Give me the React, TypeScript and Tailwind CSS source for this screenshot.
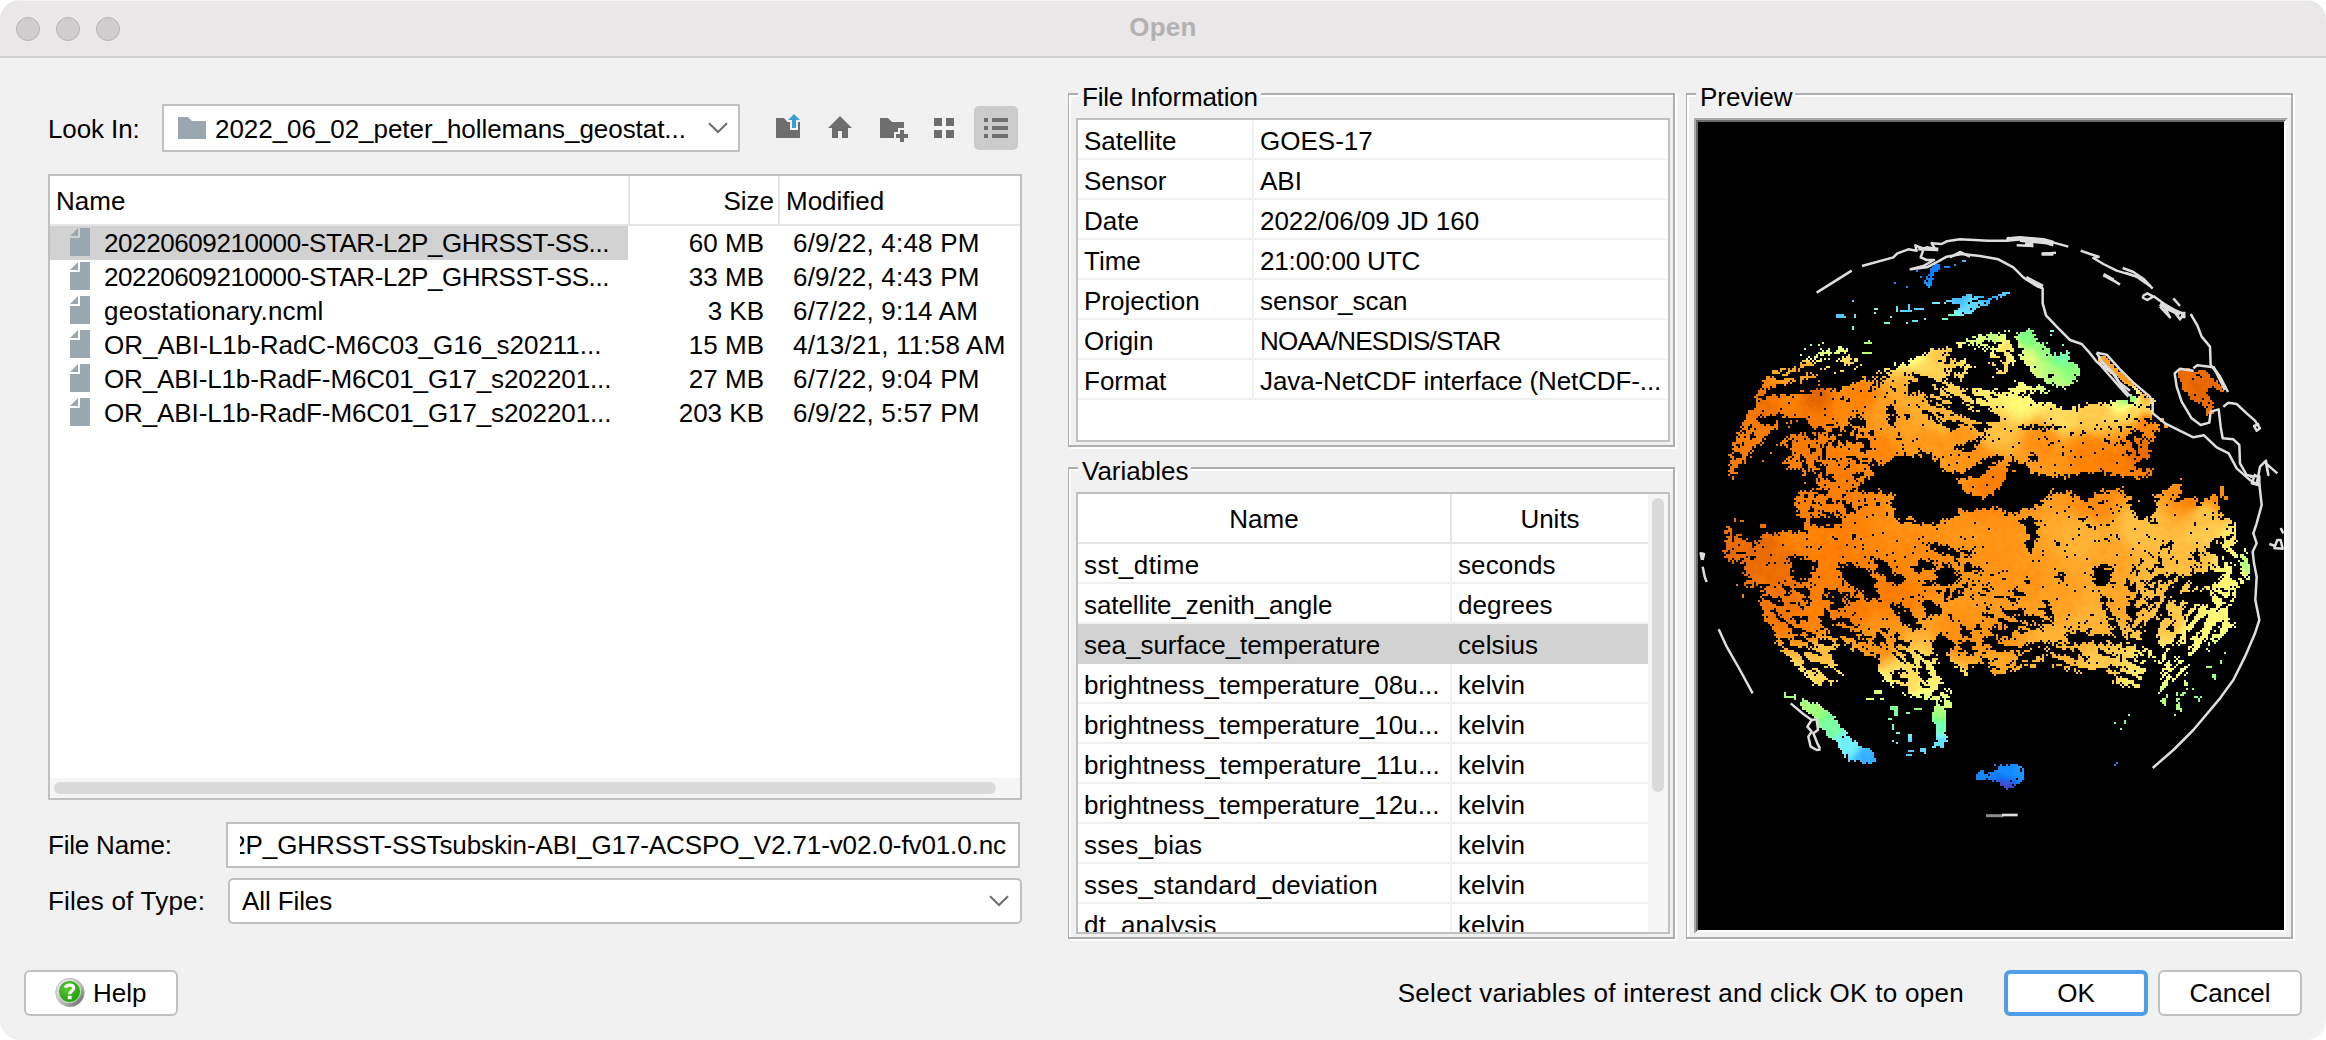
import React, { useMemo } from "react";

type Pt = [number, number];

/* ---------- Preview image: sea surface temperature over the full disk ---------- */

// Drawing units: 3 per screen pixel; one data cell is 6 units wide.
const VIEW = { x: 114, y: -174, w: 1758, h: 2424 };
const CELL = 6;

const parse = (s: string): Pt[] => s.trim().split(/\s+/).map((p) => p.split(",").map(Number) as Pt);

type Shape = { p: Pt[]; b: [number, number, number, number] };
const shape = (s: string): Shape => {
  const p = parse(s);
  const xs = p.map((q) => q[0]);
  const ys = p.map((q) => q[1]);
  return { p, b: [Math.min(...xs), Math.min(...ys), Math.max(...xs), Math.max(...ys)] };
};

const DATA = [
  // northern band
  "205,880 216,800 240,760 262,700 290,650 306,605 350,575 400,568 430,545 450,528 480,512 540,506 565,508 545,522 590,540 625,548 590,562 530,578 500,590 540,600 620,590 660,576 710,560 745,545 800,522 860,498 930,478 969,465 1000,462 1045,452 1045,462 1000,480 985,510 1010,500 1035,480 1070,480 1100,470 1108,495 1080,515 1060,555 1040,575 1010,590 980,575 990,620 1060,640 1160,672 1240,685 1320,668 1380,660 1440,675 1475,690 1475,720 1500,740 1470,790 1462,840 1420,850 1440,870 1510,872 1440,893 1340,885 1290,878 1210,890 1130,882 1070,840 1000,825 960,850 900,882 850,870 810,822 730,828 660,850 610,842 640,870 630,900 560,930 540,900 580,870 540,860 500,900 480,900 460,860 420,880 370,855 400,830 380,790 350,800 300,785 275,810 260,850 230,850 222,912",
  // green patch
  "1080,448 1112,448 1125,470 1150,490 1185,530 1225,512 1232,548 1262,560 1240,612 1212,625 1160,608 1120,580 1085,545 1068,530 1050,500",
  "1040,630 1075,620 1060,600 1100,610 1170,622 1180,635 1120,632 1060,640",
  "969,470 1020,460 1045,452 1040,470 1000,490 980,520 969,500",
  // tropical and southern body
  "195,1140 198,1040 230,1060 270,1092 340,1052 400,1058 445,1058 430,1010 398,972 425,938 470,925 480,870 540,860 580,850 620,900 560,920 610,935 690,940 700,1000 730,1040 752,1000 760,1036 820,1030 880,1010 900,990 960,990 1000,980 1060,1000 1130,985 1170,940 1230,930 1270,960 1290,960 1320,930 1380,925 1400,950 1450,950 1500,940 1560,900 1560,930 1520,990 1560,960 1600,945 1610,985 1650,950 1680,950 1680,1010 1720,1035 1735,1080 1770,1110 1765,1190 1720,1260 1700,1300 1720,1340 1660,1390 1600,1430 1565,1490 1590,1520 1560,1560 1540,1590 1500,1565 1508,1460 1470,1430 1430,1370 1400,1370 1460,1440 1440,1530 1385,1512 1300,1475 1220,1462 1150,1445 1090,1485 1050,1470 1000,1485 985,1440 930,1455 905,1440 925,1450 925,1490 880,1450 850,1400 830,1460 850,1510 878,1550 875,1585 810,1560 740,1545 680,1500 650,1470 650,1430 560,1400 520,1400 530,1470 545,1480 500,1525 455,1505 400,1455 365,1410 340,1350 292,1275 315,1220 260,1210 252,1150",
  "880,900 969,880 990,860 1045,830 1045,870 1070,875 1045,880 1020,925 975,950 930,948",
  // high latitudes
  "418,1562 450,1562 490,1578 522,1610 560,1662 600,1696 632,1710 650,1738 628,1754 600,1742 565,1742 540,1705 505,1665 476,1640 462,1606 428,1592",
  "815,1585 866,1566 858,1610 862,1680 850,1702 824,1698 830,1650 818,1620",
  "948,1790 960,1765 975,1790 1005,1774 1020,1758 1070,1752 1092,1768 1094,1802 1064,1820 1025,1814 990,1799 950,1799",
  "850,415 870,400 910,375 850,366 880,358 930,342 950,345 985,360 1010,348 1045,335 1050,340 1000,362 970,380 920,402",
  "795,310 808,280 818,255 840,255 838,275 822,285 806,326",
  // Gulf of California and Gulf of Mexico
  "1312,522 1330,525 1380,575 1430,620 1475,660 1470,680 1425,630 1370,590 1320,550",
  "1555,575 1580,565 1610,575 1635,565 1655,590 1690,620 1695,640 1660,620 1640,640 1665,670 1660,690 1640,712 1630,680 1600,660 1565,630",
  "1430,650 1480,655 1485,680 1420,670 1400,640",
].map(shape);

const HOLES = [
  "308,790 340,750 420,712 448,712 455,760 420,755 380,770 350,800 300,835 270,800",
  "320,628 380,608 520,612 560,625 480,625 430,640 330,645",
  "430,600 560,575 600,590 640,578 670,596 600,600 540,630 480,605 430,615",
  "380,590 440,560 520,548 530,560 450,580 400,600",
  "440,545 500,525 560,524 520,536 460,550",
  "290,712 350,705 410,712 360,735 300,735",
  "740,610 790,590 820,600 800,640 740,640",
  "820,620 880,560 930,560 880,592 920,600 960,625 900,625 860,600 830,640",
  "850,670 900,665 940,690 999,680 990,710 930,715 880,700",
  "900,600 935,560 1000,560 1000,625 940,620",
  "870,500 930,490 985,510 990,560 940,560 900,540 850,555",
  "770,680 800,690 840,720 900,740 880,755 820,720",
  "680,680 705,680 705,740 685,735",
  "540,755 590,760 598,790 545,790",
  "880,790 920,790 960,770 990,770 940,810 890,815",
  "560,715 610,700 620,740 570,745",
  "1010,742 1110,738 1230,740 1120,752 1060,745",
  "1110,820 1140,825 1130,850 1108,848",
  "1085,550 1060,590 1110,600 1160,625 1080,595 1060,560",
  "392,1130 440,1130 470,1155 465,1170 425,1210 395,1190",
  "530,1155 570,1150 620,1165 640,1200 665,1260 635,1262 590,1230 540,1190",
  "630,1125 690,1150 700,1180 740,1195 700,1215 660,1190",
  "455,1010 530,1010 550,1030 520,1045 455,1035",
  "740,1160 800,1140 830,1150 780,1180",
  "825,1220 830,1170 860,1150 905,1185 880,1210 860,1225",
  "800,1085 860,1095 905,1120 880,1130 810,1110",
  "900,1110 950,1112 920,1128",
  "900,1150 930,1155 970,1175 920,1180",
  "780,1260 820,1260 850,1300 800,1310",
  "690,1270 740,1280 780,1330 810,1345 760,1350 720,1320",
  "480,1215 560,1240 600,1265 540,1260 490,1240",
  "850,1240 900,1225 950,1190 900,1245 860,1260",
  "900,1345 930,1345 930,1370 905,1370",
  "830,1360 890,1390 850,1440 810,1400",
  "890,1380 940,1390 945,1430 900,1420",
  "560,1440 600,1410 660,1440 650,1500 600,1490 560,1480",
  "430,1440 460,1470 430,1480",
  "1080,1020 1120,1010 1130,1060 1115,1120 1095,1100 1110,1070",
  "1300,1160 1340,1155 1360,1180 1340,1215 1315,1220 1300,1190",
  "1190,1175 1220,1190 1225,1215 1190,1205",
  "1060,1295 1120,1305 1190,1335 1140,1335 1080,1320",
  "1000,1340 1060,1340 1050,1380 1000,1370",
  "1210,1350 1300,1360 1400,1380 1430,1400 1340,1390 1230,1390",
  "1310,1230 1340,1270 1370,1340 1400,1380 1360,1370",
  "1580,1190 1660,1170 1700,1180 1660,1210 1600,1220",
  "1560,1230 1650,1230 1640,1270 1580,1280",
  "1660,1080 1700,1110 1730,1150 1690,1150",
  "1400,960 1460,940 1500,950 1480,1010 1440,1020",
  "1490,1100 1550,1085 1520,1110",
  "1060,1440 1120,1405 1250,1410 1290,1440 1180,1420 1080,1450",
  "1060,1400 1140,1385 1240,1395 1150,1400 1080,1412",
  "1470,1330 1490,1400 1530,1440 1490,1440 1440,1370",
  "1520,1400 1600,1380 1580,1440 1530,1440",
  "1300,880 1350,900 1420,905 1340,910",
  "500,1335 560,1345 640,1400 560,1370 500,1370",
  "620,640 680,600 700,560 660,600",
].map(shape);

// Broken-cloud zones: outline, streak angle in degrees, share of cells removed, streak length
const ZONES: [Shape, number, number, number][] = (
  [
    ["360,1370 560,1380 560,1530 380,1520", 28, 0.46, 3],
    ["640,1340 860,1400 890,1600 640,1560", 40, 0.42, 2],
    ["969,1370 1250,1390 1470,1460 1450,1540 1250,1480 1050,1500 969,1480", 14, 0.45, 5],
    ["1400,1270 1560,1160 1740,1250 1740,1400 1560,1600 1480,1560 1420,1400", -48, 0.45, 3],
    ["1580,1120 1700,1060 1790,1080 1780,1260 1640,1260", 50, 0.43, 2],
    ["740,590 969,540 1050,700 969,760 860,740", 22, 0.46, 3],
    ["280,1210 500,1210 660,1400 400,1400", 20, 0.4, 2],
    ["370,740 640,740 660,860 380,880", 45, 0.4, 1.5],
    ["420,850 720,850 700,960 420,1060", 40, 0.38, 1.5],
    ["1340,720 1510,690 1510,860 1380,830", 60, 0.38, 1.5],
    ["969,470 1080,450 1090,560 990,600", 50, 0.45, 2],
    ["300,500 640,500 640,600 300,660", -18, 0.38, 4],
    ["740,1100 969,1100 1000,1380 860,1320", 30, 0.3, 2],
    ["969,1220 1160,1240 1180,1330 969,1400", 10, 0.4, 3],
    ["1390,1160 1560,1080 1580,1260 1420,1400", -60, 0.38, 2],
    ["1090,1000 1500,960 1500,1100 1100,1100", 20, 0.24, 2],
    ["1330,1200 1480,1200 1480,1400 1370,1380", 65, 0.33, 2],
    ["190,1000 310,1060 270,1220 190,1160", 40, 0.34, 1],
    ["200,700 300,640 280,920 190,920", -60, 0.36, 1.5],
    ["1550,1430 1600,1500 1560,1600 1490,1600", -75, 0.42, 3],
    ["840,340 1060,330 1060,375 900,375", -20, 0.38, 4],
    ["1550,560 1710,560 1700,710 1560,700", 45, 0.22, 1.5],
    ["640,820 969,740 969,890 640,890", 10, 0.22, 3],
    ["1230,740 1500,740 1500,900 1230,900", 10, 0.24, 3],
  ] as [string, number, number, number][]
).map(([s, a, t, l]) => [shape(s), (a * Math.PI) / 180, t, l]);

// Scattered small retrievals
const SPECKS =
  "530,402,20,10 548,408,10,6 578,360,6,6 583,405,6,8 578,440,6,12 645,385,10,6 643,398,6,6 703,306,6,6 738,320,6,6 708,380,8,14 720,390,36,6 745,370,6,18 760,385,24,6 785,385,6,6 673,426,16,6 690,410,6,6 738,428,6,6 757,422,16,6 795,415,6,6 816,368,24,6 848,412,18,6 770,270,6,6 780,290,6,6 853,258,20,6 880,252,8,6 908,242,8,6 432,506,6,6 450,494,6,6 475,494,6,6 486,488,6,6 420,524,6,6 612,486,24,6 624,480,6,6 606,518,30,6 1170,450,12,6 1172,460,6,8 1158,484,6,8 1205,492,6,6 372,1550,30,6 372,1536,8,20 400,1545,8,14 640,1530,24,10 620,1555,20,8 660,1555,14,8 690,1580,24,12 700,1590,16,18 684,1612,10,8 696,1630,8,20 708,1655,10,8 698,1682,6,6 708,1688,6,6 738,1596,12,8 760,1586,24,6 744,1662,10,22 738,1720,16,6 744,1710,20,8 780,1706,18,8 790,1714,8,6 815,1698,14,6 1000,1750,6,6 1012,1760,6,6 1365,1628,6,6 1378,1646,6,6 1395,1622,6,8 1405,1604,6,6 1366,1748,8,6 1362,1753,6,6 1605,1548,8,6 1612,1556,6,12 1594,1526,6,6 1620,1548,6,6 1612,1562,6,6 1660,1485,8,16 1680,1440,8,14 1656,1480,6,14 1640,1456,16,6 1690,1415,6,6 1760,1150,8,30 1750,1180,8,12 1724,1328,6,6 1550,1575,8,16 1560,1585,6,12 1540,1602,6,6 1572,1458,10,8 1022,1812,16,8 1030,1820,30,6 1040,1826,6,6 1512,732,12,12 1500,712,12,12 700,940,10,10 405,970,10,6 220,1012,8,14 240,1020,14,6 300,1035,16,8 230,1212,6,6 248,1242,6,10 1680,920,14,30 1690,950,12,12 328,818,6,6 305,838,8,8 430,905,6,6"
    .split(" ")
    .map((s) => s.split(",").map(Number));

// Palette position of the temperature at known spots: x, y, value
const FIELD =
  "300,680,.95 470,640,.98 250,760,.93 520,515,.62 560,550,.74 440,580,.85 600,640,.92 700,700,.86 640,820,.91 740,660,.83 860,520,.77 950,480,.62 1000,470,.58 900,630,.75 980,640,.7 840,720,.81 900,780,.87 940,830,.88 440,760,.94 560,900,.93 220,860,.94 820,790,.87 1000,750,.78 1040,500,.72 1010,560,.75 1100,470,.51 1110,540,.63 1180,590,.58 1215,530,.46 1150,510,.54 1240,570,.53 1080,660,.68 1200,710,.73 1300,700,.76 1420,690,.74 1460,730,.92 1150,780,.89 1280,820,.92 1440,810,.97 1350,860,.93 1000,910,.93 960,1000,.9 1300,970,.9 1600,960,.92 1680,950,.9 1630,1000,.77 480,990,.93 450,1080,.92 280,1110,.97 370,1170,.96 520,1150,.93 380,1290,.95 450,1340,.92 480,1420,.78 500,1500,.74 700,1240,.93 560,1290,.94 800,1150,.9 950,1050,.87 650,1390,.88 740,1500,.73 840,1520,.7 860,1570,.62 900,1370,.89 1000,1380,.88 1000,1150,.88 1100,1200,.87 1270,1060,.81 1440,1040,.78 1350,1140,.84 1200,1250,.85 1300,1330,.81 1380,1250,.84 1640,1070,.76 1600,1130,.79 1720,1080,.7 1730,1180,.69 1700,1290,.68 1600,1350,.68 1550,1480,.66 1550,1560,.56 1200,1420,.81 1340,1470,.76 1430,1510,.71 1000,1450,.84 1540,1320,.77 1480,1230,.79 450,1580,.56 520,1640,.48 560,1690,.35 620,1740,.2 700,1610,.5 715,1650,.35 840,1600,.55 840,1640,.45 840,1690,.3 745,1710,.25 960,1770,.12 1050,1770,.13 1080,1770,.15 1040,1822,.02 820,270,.1 900,350,.22 980,350,.2 940,375,.3 860,410,.42 540,405,.25 750,385,.27 700,425,.42 740,322,.12 450,500,.57 620,484,.56 1200,455,.38 1320,540,.85 1400,600,.87 1460,650,.82 1475,672,.72 1410,655,.5 1590,590,.97 1620,640,.98 1670,680,.96 1370,1640,.52 1370,1750,.12 1690,1450,.55 1620,1550,.52 1760,1160,.57 380,1550,.56 640,1550,.62"
    .split(" ")
    .map((s) => s.split(",").map(Number));

const PALETTE: [number, number, number, number][] = [
  [0, 90, 50, 180],
  [0.07, 20, 110, 245],
  [0.13, 20, 140, 255],
  [0.25, 80, 200, 255],
  [0.36, 120, 245, 250],
  [0.46, 120, 255, 180],
  [0.52, 130, 255, 125],
  [0.6, 205, 255, 125],
  [0.67, 255, 255, 125],
  [0.76, 255, 202, 76],
  [0.85, 255, 160, 34],
  [0.92, 255, 130, 4],
  [1, 220, 92, 0],
];

const colour = (t: number) => {
  const v = Math.max(0, Math.min(1, t));
  let i = 1;
  while (i < PALETTE.length - 1 && PALETTE[i][0] < v) i++;
  const a = PALETTE[i - 1];
  const b = PALETTE[i];
  const k = (v - a[0]) / (b[0] - a[0]);
  return `rgb(${[1, 2, 3].map((j) => Math.round(a[j] + (b[j] - a[j]) * k)).join(",")})`;
};

const hash = (x: number, y: number) => {
  let h = (x * 374761393 + y * 668265263) | 0;
  h = Math.imul(h ^ (h >>> 13), 1274126177);
  return ((h ^ (h >>> 16)) >>> 0) / 4294967296;
};
const smooth = (x: number, y: number) => {
  const xi = Math.floor(x);
  const yi = Math.floor(y);
  const u = x - xi;
  const v = y - yi;
  const a = hash(xi, yi) * (1 - u) + hash(xi + 1, yi) * u;
  const b = hash(xi, yi + 1) * (1 - u) + hash(xi + 1, yi + 1) * u;
  return a * (1 - v) + b * v;
};
const inside = (s: Shape, x: number, y: number) => {
  const [x0, y0, x1, y1] = s.b;
  if (x < x0 || x > x1 || y < y0 || y > y1) return false;
  let c = false;
  for (let i = 0, j = s.p.length - 1; i < s.p.length; j = i++) {
    const [ax, ay] = s.p[i];
    const [bx, by] = s.p[j];
    if (ay > y !== by > y && x < ((bx - ax) * (y - ay)) / (by - ay) + ax) c = !c;
  }
  return c;
};

const valid = (x: number, y: number) => {
  if (SPECKS.some(([sx, sy, w, h]) => x >= sx && x < sx + w && y >= sy && y < sy + h)) return true;
  const cx = x / CELL;
  const cy = y / CELL;
  // Edges are calmer at high latitudes, where the patches are small.
  const k = y > 1560 || y < 420 || (x > 1300 && y < 710) ? 0.45 : 1;
  const wx = x + (smooth(cx / 2, cy / 2) - 0.5) * 18 * k + (hash(cx | 0, (cy | 0) + 900) - 0.5) * 15 * k;
  const wy = y + (smooth(cx / 2 + 70, cy / 2 + 30) - 0.5) * 18 * k + (hash((cx | 0) + 500, cy | 0) - 0.5) * 15 * k;
  if (!DATA.some((s) => inside(s, wx, wy))) return false;
  if (HOLES.some((s) => inside(s, wx, wy))) return false;
  for (const [s, a, share, len] of ZONES) {
    if (!inside(s, wx, wy)) continue;
    const u = (cx * Math.cos(a) + cy * Math.sin(a)) / (1.3 * len);
    const v = (-cx * Math.sin(a) + cy * Math.cos(a)) / 1.4;
    const n = smooth(u, v) * 0.62 + smooth(u / 2 + 40, v / 2.4 + 11) * 0.28 + hash((cx | 0) + 31, (cy | 0) + 7) * 0.1;
    if (n < share) return false;
  }
  const patch = smooth(cx / 16 + 5, cy / 10 + 9);
  const fine = smooth(cx / 2.2 + cy / 5, cy / 1.5 - cx / 6);
  if (patch > 0.5 && fine < 0.1 + (patch - 0.5) * 0.25) return false;
  return hash((cx | 0) + 77, (cy | 0) + 13) > 0.016;
};

const temperature = (x: number, y: number) => {
  let sum = 0;
  let weight = 0;
  for (const [fx, fy, t] of FIELD) {
    const d = (x - fx) ** 2 + (y - fy) ** 2 + 400;
    const w = 1 / (d * d);
    sum += w * t;
    weight += w;
  }
  return sum / weight + (smooth(x / 12, y / 12) - 0.5) * 0.02;
};

const LEVELS = 96;

const COAST = [
  "470,338 575,272",
  "606,258 700,232 712,220 745,208 770,212 766,196 790,206 800,202 825,206 815,190 845,192 860,184 900,178 985,182 1040,182 1048,172",
  "790,210 782,232 800,240 822,240 790,258 752,268 800,262 835,244 860,230 905,222 960,228 1015,238 1060,262 1090,292 1130,318 1148,325 1148,370 1158,406 1190,440 1230,480 1265,492 1285,514 1310,545 1365,585 1385,620 1410,648",
  "870,232 900,216 930,230",
  "1040,182 1100,176 1160,182 1225,200",
  "1070,196 1120,198",
  "1080,182 1160,190 1180,196",
  "1145,222 1188,218",
  "1262,212 1290,222 1316,230 1300,234 1330,252 1370,272 1430,290",
  "1388,264 1420,276 1450,296 1478,326",
  "1395,278 1430,290 1470,318",
  "1332,284 1380,314",
  "1448,348 1462,340 1480,350 1462,360 1450,354 1448,348",
  "1480,348 1510,370 1540,388 1570,402 1560,418 1545,398 1515,385 1530,412 1500,380",
  "1540,355 1560,378",
  "1592,402 1612,436 1625,470 1650,500 1652,555 1680,590 1704,636",
  "1660,560 1685,610 1694,630",
  "1310,518 1340,524 1380,568 1420,608 1470,650 1478,672 1478,700 1515,730 1600,772 1632,766 1670,802 1706,820 1730,865 1770,900 1790,912 1800,860 1818,842 1825,885 1818,850 1852,880",
  "1310,518 1325,545 1355,575 1375,605 1410,632",
  "1315,548 1350,588 1380,622 1405,650",
  "1600,572 1560,566 1544,580 1550,620 1565,665 1595,715 1622,735 1648,728 1652,695 1676,688 1682,740 1688,775 1720,778 1738,795 1740,850 1760,885 1785,890",
  "1600,565 1612,556 1660,562 1680,590",
  "1690,680 1705,668 1730,672 1760,700 1785,722 1800,745 1790,752 1782,738 1798,732",
  "1770,890 1798,888 1798,916 1775,910 1786,882",
  "1798,912 1805,975 1790,1030 1780,1060 1790,1090 1778,1115 1782,1150 1790,1190 1786,1260 1798,1320 1785,1360 1755,1430 1720,1500 1680,1555 1600,1650 1540,1710 1478,1764",
  "1828,1092 1845,1098 1852,1080 1862,1080 1868,1106 1840,1104",
  "1862,1044 1870,1060",
  "126,1140 122,1120 132,1122 128,1140",
  "128,1160 134,1190 140,1206",
  "176,1348 200,1400 240,1470 278,1540",
  "392,1570 430,1602 455,1620 442,1640 455,1655 445,1670 452,1700 470,1710 482,1708",
  "455,1620 470,1618 474,1650 460,1660 472,1690 480,1705",
];

function SatellitePreview() {
  const layers = useMemo(() => {
    const out: Record<number, string> = {};
    for (let y = VIEW.y; y < VIEW.y + VIEW.h; y += CELL) {
      let start = 0;
      let level = -1;
      for (let x = VIEW.x; x <= VIEW.x + VIEW.w; x += CELL) {
        const mx = x + 3;
        const my = y + 3;
        const next =
          x < VIEW.x + VIEW.w && my > 230 && my < 1840 && valid(mx, my)
            ? Math.max(0, Math.min(LEVELS, Math.round(temperature(mx, my) * LEVELS)))
            : -1;
        if (next !== level) {
          if (level >= 0) out[level] = (out[level] ?? "") + `M${start} ${y}H${x}v6H${start}z`;
          start = x;
          level = next;
        }
      }
    }
    return Object.entries(out);
  }, []);
  return (
    <svg
      className="block h-[808px] w-[586px] bg-black"
      viewBox={`${VIEW.x} ${VIEW.y} ${VIEW.w} ${VIEW.h}`}
      preserveAspectRatio="none"
    >
      <g shapeRendering="crispEdges">
        {layers.map(([level, d]) => (
          <path key={level} d={d} fill={colour(Number(level) / LEVELS)} />
        ))}
      </g>
      <g fill="none" stroke="#dedede" strokeWidth="7.5" strokeLinejoin="round">
        {COAST.map((points) => (
          <polyline key={points} points={points} />
        ))}
        <path d="M978 1907H1030" stroke="#8c8c8c" strokeWidth="9" />
        <path d="M1026 1905H1073" strokeWidth="8" />
        <path d="M1040 178L1080 174L1150 180L1180 188M1095 192L1120 196" strokeWidth="12" />
        <path d="M1098 294L1148 320M1500 372L1560 402M1570 395V415" strokeWidth="13" />
        <path d="M775 206L835 208M1145 222H1180M1330 284L1360 300" strokeWidth="11" />
      </g>
    </svg>
  );
}

/* ---------- Icons ---------- */

const Chevron = () => (
  <svg className="h-[12px] w-[20px]" viewBox="0 0 20 12" fill="none" stroke="#6e6e6e" strokeWidth="2">
    <path d="M1 1.2L10 10L19 1.2" />
  </svg>
);
const FileIcon = () => (
  <svg className="h-7 w-5 shrink-0" viewBox="0 0 20 28" fill="#9aa7b0">
    <path d="M10 0H20V28H0V10H10z" />
    <path d="M8 0V8H0z" />
  </svg>
);
const FolderIcon = () => (
  <svg className="h-[22px] w-[28px] shrink-0" viewBox="0 0 28 22" fill="#9aa7b0">
    <path d="M0 0H10L14 4H28V22H0z" />
  </svg>
);
const UpFolder = () => (
  <svg className="h-8 w-8" viewBox="0 0 32 32">
    <path d="M4 10H12L15.5 14H18V22H26V14H28V30H4z" fill="#6e6e6e" />
    <path d="M22 6L28 12H24V20H20V12H16z" fill="#389fd6" />
  </svg>
);
const Home = () => (
  <svg className="h-8 w-8" viewBox="0 0 32 32" fill="#6e6e6e">
    <path d="M16 8L28 20H24V30H18V23H14V30H8V20H4z" />
  </svg>
);
const NewFolder = () => (
  <svg className="h-8 w-8 overflow-visible" viewBox="0 0 32 32" fill="#6e6e6e">
    <path d="M4 10H12L16 14H28V20H22V24H18V30H4z" />
    <path d="M24 22H28V26H32V30H28V34H24V30H20V26H24z" />
  </svg>
);
const Tiles = () => (
  <svg className="h-8 w-8" viewBox="0 0 32 32" fill="#6e6e6e">
    <path d="M6 10h8v8H6zM18 10h8v8h-8zM6 22h8v8H6zM18 22h8v8h-8z" />
  </svg>
);
const Details = () => (
  <svg className="h-8 w-8" viewBox="0 0 32 32" fill="#6e6e6e">
    <path d="M4 6h4v4H4zM12 6h16v4H12zM4 14h4v4H4zM12 14h16v4H12zM4 22h4v4H4zM12 22h16v4H12z" />
  </svg>
);
const HelpIcon = () => (
  <svg className="h-[32px] w-[32px]" viewBox="0 0 32 32">
    <defs>
      <radialGradient id="helpGreen" cx="0.4" cy="0.35" r="0.7">
        <stop offset="0" stopColor="#5ccb30" />
        <stop offset="1" stopColor="#1f9a10" />
      </radialGradient>
      <linearGradient id="helpRim" x1="0" y1="0" x2="1" y2="1">
        <stop offset="0" stopColor="#f4f4f4" />
        <stop offset="0.6" stopColor="#b5b5b5" />
        <stop offset="1" stopColor="#4e4e4e" />
      </linearGradient>
    </defs>
    <circle cx="16" cy="15.5" r="14.3" fill="url(#helpRim)" stroke="#a8a8a8" strokeWidth="0.6" />
    <circle cx="15.5" cy="14.5" r="11" fill="url(#helpGreen)" stroke="#fff" strokeWidth="0.7" />
    <path
      d="M11.4 10.6C12.4 7.2 19.6 7.2 19.6 11C19.6 14 15.7 14 15.7 17.2"
      fill="none"
      stroke="#fff"
      strokeWidth="3.2"
    />
    <rect x="13.8" y="18.8" width="3.8" height="3.4" fill="#fff" />
  </svg>
);

/* ---------- Data ---------- */

const FILES = [
  ["20220609210000-STAR-L2P_GHRSST-SS...", "60 MB", "6/9/22, 4:48 PM", "tracking-[-0.41px]"],
  ["20220609210000-STAR-L2P_GHRSST-SS...", "33 MB", "6/9/22, 4:43 PM", "tracking-[-0.41px]"],
  ["geostationary.ncml", "3 KB", "6/7/22, 9:14 AM", "tracking-[0.18px]"],
  ["OR_ABI-L1b-RadC-M6C03_G16_s20211...", "15 MB", "4/13/21, 11:58 AM", "tracking-[-0.02px]"],
  ["OR_ABI-L1b-RadF-M6C01_G17_s202201...", "27 MB", "6/7/22, 9:04 PM", "tracking-[-0.12px]"],
  ["OR_ABI-L1b-RadF-M6C01_G17_s202201...", "203 KB", "6/9/22, 5:57 PM", "tracking-[-0.12px]"],
];
const INFO = [
  ["Satellite", "GOES-17", ""],
  ["Sensor", "ABI", ""],
  ["Date", "2022/06/09 JD 160", "tracking-[-0.04px]"],
  ["Time", "21:00:00 UTC", "tracking-[-0.15px]"],
  ["Projection", "sensor_scan", ""],
  ["Origin", "NOAA/NESDIS/STAR", "tracking-[-0.74px]"],
  ["Format", "Java-NetCDF interface (NetCDF-...", "tracking-[-0.1px]"],
];
const VARIABLES = [
  ["sst_dtime", "seconds", "tracking-[0.5px]"],
  ["satellite_zenith_angle", "degrees", "tracking-[-0.08px]"],
  ["sea_surface_temperature", "celsius", ""],
  ["brightness_temperature_08u...", "kelvin", "tracking-[0.05px]"],
  ["brightness_temperature_10u...", "kelvin", "tracking-[0.05px]"],
  ["brightness_temperature_11u...", "kelvin", "tracking-[0.13px]"],
  ["brightness_temperature_12u...", "kelvin", "tracking-[0.05px]"],
  ["sses_bias", "kelvin", "tracking-[0.3px]"],
  ["sses_standard_deviation", "kelvin", "tracking-[0.28px]"],
  ["dt_analysis", "kelvin", "tracking-[0.25px]"],
];

/* ---------- Layout ---------- */

function Group({
  title,
  titleClass = "",
  className,
  children,
}: {
  title: string;
  titleClass?: string;
  className: string;
  children: React.ReactNode;
}) {
  return (
    <section
      className={`relative border-2 border-l border-[#adadad] shadow-[2px_2px_0_#fff,inset_2px_2px_0_#fff] ${className}`}
    >
      <h2 className={`absolute -top-[13px] left-[9px] bg-[#f1f1f1] pr-[3px] pl-1 leading-[30px] ${titleClass}`}>{title}</h2>
      {children}
    </section>
  );
}

function FilePane() {
  return (
    <div className="w-[974px]">
      <div className="flex h-12 items-center">
        <span className="w-[114px] pt-[2px] leading-[50px] tracking-[-0.1px]">Look In:</span>
        <div className="flex h-12 w-[578px] items-center border-2 border-[#c0c0c0] bg-white pr-[10px] pl-[14px]">
          <FolderIcon />
          <span className="mt-[2px] ml-[9px] flex-1 leading-[46px] tracking-[-0.05px]">2022_06_02_peter_hollemans_geostat...</span>
          <Chevron />
        </div>
        <div className="ml-7 flex items-center gap-5 pb-2">
          <div className="ml-1"><UpFolder /></div>
          <Home />
          <NewFolder />
          <Tiles />
        </div>
        <div className="ml-[14px] flex h-11 w-11 items-center justify-center rounded-[5px] bg-[#cbcbcb]">
          <Details />
        </div>
      </div>

      <div className="mt-[22px] flex h-[626px] flex-col border-2 border-[#c0c0c0] bg-white">
        <div className="flex h-[50px] border-b-2 border-[#e5e5e5] leading-[50px]">
          <div className="w-[580px] border-r-2 border-[#e5e5e5] pl-[6px]">Name</div>
          <div className="w-[150px] border-r-2 border-[#e5e5e5] pr-1 text-right">Size</div>
          <div className="pl-[6px]">Modified</div>
        </div>
        <div className="flex-1">
          {FILES.map(([name, size, modified, tracking], i) => (
            <div key={i} className="flex h-[34px] leading-[34px]">
              <div className={`flex w-[578px] items-start pt-[2px] pl-5 ${i === 0 ? "bg-[#d2d2d2]" : ""}`}>
                <FileIcon />
                <span className={`-mt-[2px] ml-[14px] ${tracking}`}>{name}</span>
              </div>
              <div className="w-[136px] text-right">{size}</div>
              <div className="pl-[29px] tracking-[0.2px]">{modified}</div>
            </div>
          ))}
        </div>
        <div className="h-5 bg-[#f5f5f5] pt-1 pl-1">
          <div className="h-3 w-[942px] rounded-full bg-[#dadada]" />
        </div>
      </div>

      <div className="mt-[22px] flex h-[46px]">
        <span className="w-[178px] leading-[46px] tracking-[-0.2px]">File Name:</span>
        <div className="flex h-[46px] w-[794px] border-2 border-[#c0c0c0] bg-white px-3">
          <div className="flex flex-1 justify-end overflow-hidden leading-[42px] tracking-[-0.1px] whitespace-nowrap">
            2P_GHRSST-SSTsubskin-ABI_G17-ACSPO_V2.71-v02.0-fv01.0.nc
          </div>
        </div>
      </div>
      <div className="mt-[10px] flex h-[46px]">
        <span className="w-[180px] leading-[46px] tracking-[0.22px]">Files of Type:</span>
        <div className="flex h-[46px] w-[794px] items-center rounded-[5px] border-2 border-[#c0c0c0] bg-white pr-[11px] pl-3">
          <span className="flex-1 leading-[42px] tracking-[-0.1px]">All Files</span>
          <Chevron />
        </div>
      </div>
    </div>
  );
}

function InfoTable() {
  return (
    <div className="mt-[23px] ml-[7px] h-[324px] w-[594px] border-2 border-[#c0c0c0] bg-white">
      {INFO.map(([label, value, tracking]) => (
        <div key={label} className="flex h-10 border-b-2 border-[#f0f0f0] leading-[42px]">
          <div className="w-[176px] border-r-2 border-[#f0f0f0] pl-[6px]">{label}</div>
          <div className={`pl-[6px] whitespace-nowrap ${tracking}`}>{value}</div>
        </div>
      ))}
    </div>
  );
}

function VariableTable() {
  return (
    <div className="mt-[23px] ml-[7px] flex h-[442px] w-[594px] border-2 border-[#c0c0c0] bg-white">
      <div className="w-[570px] overflow-hidden">
        <div className="flex h-[50px] border-b-2 border-[#e5e5e5] text-center leading-[50px]">
          <div className="w-[374px] border-r-2 border-[#e5e5e5]">Name</div>
          <div className="flex-1">Units</div>
        </div>
        {VARIABLES.map(([name, unit, tracking], i) => (
          <div
            key={name}
            className={`flex h-10 border-b-2 leading-[42px] ${i === 2 ? "border-[#d2d2d2] bg-[#d2d2d2]" : "border-[#f0f0f0]"}`}
          >
            <div
              className={`w-[374px] border-r-2 pl-[6px] ${tracking} ${i === 2 ? "border-[#d2d2d2]" : "border-[#f0f0f0]"}`}
            >
              {name}
            </div>
            <div className="pl-[6px] tracking-[0.1px]">{unit}</div>
          </div>
        ))}
      </div>
      <div className="w-5 bg-[#f5f5f5] pt-1 pl-1">
        <div className="h-[294px] w-3 rounded-full bg-[#dadada]" />
      </div>
    </div>
  );
}

export default function App() {
  return (
    <div className="h-[1040px] w-[2326px] bg-white font-['Liberation_Sans',Arial,sans-serif] text-[26px] text-black">
      <div className="flex h-full flex-col overflow-hidden rounded-[20px] bg-[#f1f1f1]">
        <header className="grid h-[58px] grid-cols-3 items-center border-t border-b-2 border-t-[#f4f3f4] border-b-[#d2d1d2] bg-[#e9e7e8]">
          <div className="flex gap-4 pl-4">
            <span className="h-6 w-6 rounded-full border border-[#b4b2b3] bg-[#cfcdce]" />
            <span className="h-6 w-6 rounded-full border border-[#b4b2b3] bg-[#cfcdce]" />
            <span className="h-6 w-6 rounded-full border border-[#b4b2b3] bg-[#cfcdce]" />
          </div>
          <h1 className="-mt-[2px] text-center font-bold tracking-[0.2px] text-[#b3b1b2]">Open</h1>
        </header>

        <main className="flex h-[912px] items-start pl-12">
          <div className="pt-[46px]">
            <FilePane />
          </div>
          <div className="ml-[46px] pt-[35px]">
            <Group title="File Information" titleClass="tracking-[-0.22px]" className="h-[354px] w-[607px]">
              <InfoTable />
            </Group>
            <Group title="Variables" className="mt-5 h-[472px] w-[607px]">
              <VariableTable />
            </Group>
          </div>
          <div className="ml-[11px] pt-[35px]">
            <Group title="Preview" className="h-[846px] w-[607px]">
              <div className="mt-[23px] ml-[7px] h-[816px] w-[594px] border-2 border-t-[#aaa] border-r-[#f1f1f1] border-b-[#f1f1f1] border-l-[#aaa]">
                <div className="border-2 border-t-[#6b6b6b] border-r-white border-b-white border-l-[#6b6b6b]">
                  <SatellitePreview />
                </div>
              </div>
            </Group>
          </div>
        </main>

        <footer className="flex items-start px-6 leading-[44px]">
          <button className="flex h-[46px] w-[154px] items-center rounded-md border-2 border-[#c0c0c0] bg-white pl-7">
            <HelpIcon />
            <span className="ml-[7px]">Help</span>
          </button>
          <span className="ml-auto leading-[46px] tracking-[0.29px]">Select variables of interest and click OK to open</span>
          <button className="ml-10 h-[46px] w-[144px] rounded-md border-4 border-[#4f9ee8] bg-white leading-[38px]">OK</button>
          <button className="ml-[10px] h-[46px] w-[144px] rounded-md border-2 border-[#c0c0c0] bg-white leading-[42px]">
            Cancel
          </button>
        </footer>
      </div>
    </div>
  );
}
